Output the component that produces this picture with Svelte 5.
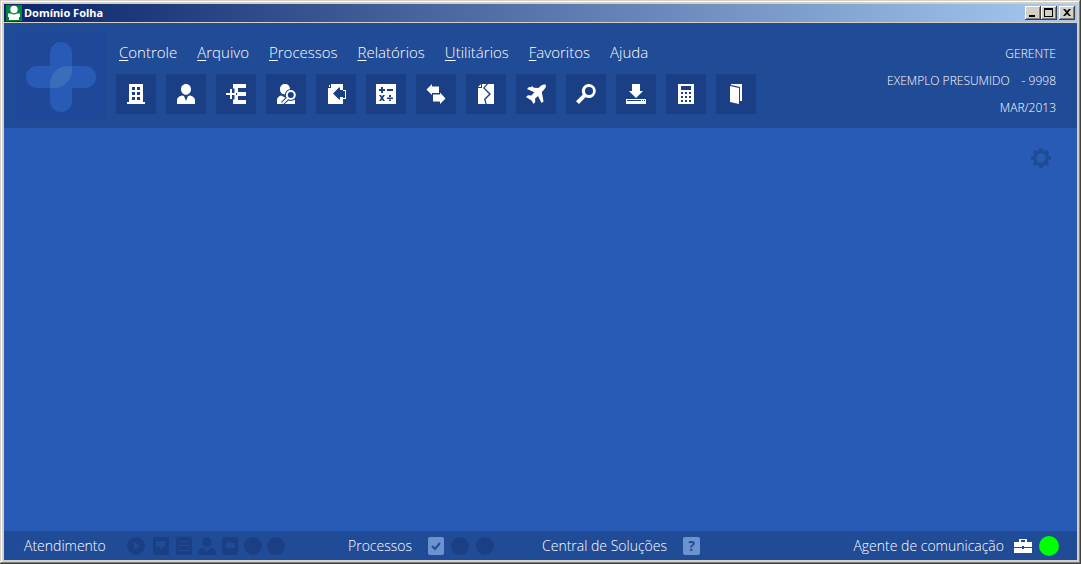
<script lang="ts">
  interface MenuItem {
    key: string
    rest: string
  }

  interface Tool {
    label: string
    path: string
    lens?: boolean
  }

  const menu: MenuItem[] = [
    {key: 'C', rest: 'ontrole'},
    {key: 'A', rest: 'rquivo'},
    {key: 'P', rest: 'rocessos'},
    {key: 'R', rest: 'elatórios'},
    {key: 'U', rest: 'tilitários'},
    {key: 'F', rest: 'avoritos'},
    {key: '', rest: 'Ajuda'},
  ];

  // 20x20 grid, even-odd fill
  const tools: Tool[] = [
    {
      label: 'Empresas',
      path: 'M3 0H17V18H19V20H1V18H3ZM6 3V6H9V3ZM11 3V6H14V3ZM6 8V11H9V8ZM11 8V11H14V8ZM6 13V16H9V13ZM11 13V16H14V13Z',
    },
    {
      label: 'Empregados',
      path: 'M10 0C13 0 15 2.3 15 5.3S12.8 10.8 10 10.8S5 8.3 5 5.3S7 0 10 0ZM6 11.5L8 12L10 17L12 12L14 11.5C17.5 12.5 19 14 19 16.5V20H1V16.5C1 14 2.500 12.500 6 11.500Z',
    },
    {
      label: 'Rubricas',
      path: 'M7 0H20V4H12V8H20V12H12V16H20V20H7V15.500H8.500V11H11V9H8.500V4.500H7ZM0 9H4V5H6V9H10V11H6V15H4V11H0Z',
    },
    {
      label: 'Consulta de empregados',
      path: 'M9 0C12 0 14 2 14 5.2S12 10.400 9 10.400S4 8.400 4 5.200S6 0 9 0ZM5 11.500L9 13.500L13 11.500Q19 13 19 17V20H1V16Q1 13 5 11.500Z',
      lens: true,
    },
    {
      label: 'Importar documento',
      path: 'M5 0H17V6H14V3.500H13L7 9.500L13 15.500H14V13H17V20H2V4H5ZM3 1V3H4V1ZM17 6H20V15H17V14H19V7H17Z',
    },
    {
      label: 'Cálculo',
      path: 'M0 0H20V20H0ZM5 3V5H3V7H5V9H7V7H9V5H7V3ZM11 5V7H17V5ZM3 11L5 14L3 17H5L6 15.500L7 17H9L7 14L9 11H7L6 12.500L5 11ZM13 11V13H15V11ZM11 13.500V15H17V13.500ZM13 15.500V17H15V15.500Z',
    },
    {
      label: 'Transferência',
      path: 'M0.500 5.500L6 0V2.500H13V9H6V11ZM7 10.500H14V8.500L19.500 14.500L14 20V17.500H7Z',
    },
    {
      label: 'Rescisão',
      path: 'M6 0H10.500L7 4L13 10L8 15L9.500 20H2V4H6ZM2 3L5 0V3ZM12 0H18V20H10.700L9.500 15.500L15 10L8.700 4Z',
    },
    {
      label: 'Férias',
      path: 'M19.500 0.500C20.600 2.600 19.500 4.500 15.800 8L17.500 17.500L15.500 19L12 12L9 14.800L9.300 18L7.500 20L5.500 16.500L0 13L2 11.300L5.500 11.500L8.300 8.200L1 5L3 3L5 3.300L6 2L8 3.700L12.300 4C15.500 1 17 0 19.500 0.500Z',
    },
    {
      label: 'Pesquisar',
      path: 'M13 0A7 7 0 1 1 9.500 13.200L3 20L0 17.200L6.800 10.500A7 7 0 0 1 13 0ZM13 3A4 4 0 1 0 13 11A4 4 0 1 0 13 3Z',
    },
    {
      label: 'Baixar',
      path: 'M6 0H14V7H17L10 14L3 7H6ZM0 15H20V20H0ZM1 16V17H15V16ZM16 16V17H17V16ZM18 16V17H19V16Z',
    },
    {
      label: 'Calculadora',
      path: 'M2 0H18V20H2ZM5 2V6H15V2ZM5 8V10H7V8ZM9 8V10H11V8ZM13 8V10H15V8ZM5 12V14H7V12ZM9 12V14H11V12ZM13 12V14H15V12ZM5 16V18H7V16ZM9 16V18H11V16ZM13 16V18H15V16Z',
    },
    {
      label: 'Sair',
      path: 'M4 2L13 4V20L4 18ZM5 0H16V17H14V3L5 1Z',
    },
  ];

  // 18x18 grid, even-odd fill
  const services = [
    {label: 'Chat', path: 'M3 0H15Q17 0 17 2V16Q17 18 15 18H3Q1 18 1 16V2Q1 0 3 0ZM5 4Q4 4 4 5V9Q4 10 5 10H8V13L11 10H12Q13 10 13 9V5Q13 4 12 4Z'},
    {label: 'Solicitações', path: 'M3 0H15Q17 0 17 2V16Q17 18 15 18H3Q1 18 1 16V2Q1 0 3 0ZM4 4V5H14V4ZM4 8V9H14V8ZM4 13V14H14V13Z'},
    {label: 'Clientes', path: 'M9 0A4.500 4.800 0 1 1 9 9.800A4.500 4.800 0 1 1 9 0ZM5 10.500L9 15L13 10.500Q18 12 18 16V18H0V16Q0 12 5 10.500Z'},
    {label: 'Retorno', path: 'M3 0H15Q17 0 17 2V16Q17 18 15 18H3Q1 18 1 16V2Q1 0 3 0ZM4 8.500L8 4V6H14V11H8V13Z'},
    {label: 'Alertas', path: 'M9 0A9 9 0 1 1 9 18A9 9 0 1 1 9 0Z'},
    {label: 'Mensagens', path: 'M9 0A9 9 0 1 1 9 18A9 9 0 1 1 9 0Z'},
  ];

  const teeth = [0, 45, 90, 135, 180, 225, 270, 315];
</script>

<div class="window">
  <div class="titlebar">
    <svg class="app-icon" width="16" height="16" viewBox="0 0 16 16" aria-hidden="true">
      <rect width="16" height="16" fill="#00833e" />
      <ellipse cx="8" cy="4.500" rx="3.700" ry="3.700" fill="#fff" />
      <path d="M2 8.500H5Q8 10.500 11 8.500H14V12H13V15H3V12H2Z" fill="#fff" />
    </svg>
    <h1>Domínio Folha</h1>
    <div class="controls">
      <button aria-label="Minimizar">
        <svg width="12" height="10" viewBox="0 0 12 10"><path d="M2 7H8V9H2Z" /></svg>
      </button>
      <button aria-label="Maximizar">
        <svg width="12" height="10" viewBox="0 0 12 10"><path fill-rule="evenodd" d="M1 0H10V9H1ZM2 2V8H9V2Z" /></svg>
      </button>
      <button class="close" aria-label="Fechar">
        <svg width="12" height="10" viewBox="0 0 12 10"><path d="M2 1H4L6 3L8 1H10L7 4.500L10 8H8L6 6L4 8H2L5 4.500Z" /></svg>
      </button>
    </div>
  </div>

  <header>
    <div class="logo">
      <svg width="70" height="70" viewBox="0 0 70 70" aria-hidden="true">
        <path fill="#275bb6" d="M24 11A11 11 0 0 1 46 11V24H59A11 11 0 0 1 59 46H46V59A11 11 0 0 1 24 59V46H11A11 11 0 0 1 11 24H24Z" />
        <path fill="#3b6db8" d="M46 24H42C31 24 24 33 24 42V46H28C38 46 46 38 46 28Z" />
      </svg>
    </div>
    <div class="center">
      <nav>
        {#each menu as item}
          <a href="#{item.key + item.rest}">{#if item.key}<u>{item.key}</u>{/if}{item.rest}</a>
        {/each}
      </nav>
      <div class="toolbar">
        {#each tools as tool}
          <button aria-label={tool.label}>
            <svg width="20" height="20" viewBox="0 0 20 20">
              <path fill-rule="evenodd" d={tool.path} />
              {#if tool.lens}
                <path class="lens-edge" d="M12 14L6.500 19.500" />
                <circle class="lens-edge" cx="14.800" cy="11" r="4" />
                <path class="lens" d="M12 14L6.500 19.500" />
                <circle class="lens" cx="14.800" cy="11" r="4" />
              {/if}
            </svg>
          </button>
        {/each}
      </div>
    </div>
    <div class="session">
      <span>GERENTE</span>
      <span class="company"><span>EXEMPLO PRESUMIDO</span><span>- 9998</span></span>
      <span>MAR/2013</span>
    </div>
  </header>

  <main>
    <button class="settings" aria-label="Configurações">
      <svg width="20" height="20" viewBox="0 0 20 20">
        <circle cx="10" cy="10" r="6.200" fill="none" stroke="#204b97" stroke-width="3" />
        {#each teeth as angle}
          <path fill="#204b97" d="M8.200 0H11.800L12.300 3.500H7.700Z" transform="rotate({angle} 10 10)" />
        {/each}
      </svg>
    </button>
  </main>

  <footer>
    <div class="group">
      <span class="label">Atendimento</span>
      <div class="services">
        <button aria-label="Iniciar">
          <svg width="20" height="18" viewBox="0 0 20 18"><path fill-rule="evenodd" d="M9 0A9 9 0 1 1 9 18A9 9 0 1 1 9 0ZM7 5V13L13 9Z" /></svg>
        </button>
        {#each services as service}
          <button aria-label={service.label}>
            <svg width="18" height="18" viewBox="0 0 18 18"><path fill-rule="evenodd" d={service.path} /></svg>
          </button>
        {/each}
      </div>
    </div>
    <div class="group">
      <span class="label">Processos</span>
      <div class="processes">
        <button aria-label="Concluídos">
          <svg width="16" height="18" viewBox="0 0 16 18">
            <rect width="16" height="18" rx="2" fill="#6c93cd" />
            <path d="M4 9L7 12L12 6" fill="none" stroke="#204b97" stroke-width="2" />
          </svg>
        </button>
        <button aria-label="Em andamento">
          <svg width="18" height="18" viewBox="0 0 18 18"><circle cx="9" cy="9" r="9" /></svg>
        </button>
        <button aria-label="Pendentes">
          <svg width="18" height="18" viewBox="0 0 18 18"><circle cx="9" cy="9" r="9" /></svg>
        </button>
      </div>
    </div>
    <div class="group">
      <span class="label">Central de Soluções</span>
      <button class="help">?</button>
    </div>
    <div class="group agent">
      <span>Agente de comunicação</span>
      <svg width="18" height="14" viewBox="0 0 18 14" fill="#fff" aria-hidden="true">
        <path fill-rule="evenodd" d="M5 0H13V3H18V8H10V7H8V8H0V3H5ZM7 1V3H11V1ZM0 9H8V10H10V9H18V14H0Z" />
      </svg>
      <i class="status"></i>
    </div>
  </footer>
</div>

<style>
  :global(body) {
    background: #d4d0c8;
  }

  .window {
    box-sizing: border-box;
    display: flex;
    flex-direction: column;
    min-height: 100vh;
    padding: 4px;
    background: #d4d0c8;
    box-shadow: inset -1px -1px #404040, inset 1px 1px #d4d0c8, inset -2px -2px #808080, inset 2px 2px #fff;
    color: #fff;
    font-family: "Segoe UI Light", "Open Sans", "Noto Sans", sans-serif;
    font-weight: 300;
  }

  button {
    display: flex;
    align-items: center;
    justify-content: center;
    padding: 0;
    border: 0;
    background: none;
    cursor: pointer;
  }

  svg {
    display: block;
    flex: none;
  }

  .titlebar {
    display: flex;
    align-items: center;
    height: 18px;
    margin-bottom: 1px;
    padding: 0 2px;
    background: linear-gradient(90deg, #0a246a, #a6caf0);
  }

  h1 {
    flex: 1;
    margin: 0 0 0 2px;
    font: bold 11px/18px Tahoma, "Noto Sans", sans-serif;
  }

  .controls {
    display: flex;
  }

  .controls button {
    width: 16px;
    height: 14px;
    background: #d4d0c8;
    box-shadow: inset -1px -1px #404040, inset 1px 1px #fff, inset -2px -2px #808080;
  }

  .controls .close {
    margin-left: 2px;
  }

  header {
    display: flex;
    padding: 9px 21px 7px 12px;
    background: #204b97;
  }

  .logo {
    display: flex;
    align-items: center;
    justify-content: center;
    width: 90px;
    background: #204898;
  }

  .center {
    flex: 1;
    margin-left: 10px;
  }

  nav {
    display: flex;
    gap: 20px;
    padding: 9px 0 10px 3px;
  }

  nav a {
    color: #fff;
    font-size: 15px;
    line-height: 23px;
    text-decoration: none;
  }

  u {
    text-underline-offset: 2px;
  }

  .toolbar {
    display: flex;
    gap: 10px;
  }

  .toolbar button {
    width: 40px;
    height: 40px;
    background: #1b3f85;
  }

  .toolbar svg {
    fill: #fff;
  }

  .lens-edge {
    fill: #1b3f85;
    stroke: #1b3f85;
    stroke-width: 4;
  }

  .lens {
    fill: none;
    stroke: #fff;
    stroke-width: 2;
  }

  .session {
    display: flex;
    flex-direction: column;
    align-items: flex-end;
    padding-top: 8px;
    font-size: 12px;
    line-height: 27px;
  }

  .company {
    display: flex;
    gap: 12px;
  }

  main {
    display: flex;
    flex: 1;
    align-items: flex-start;
    justify-content: flex-end;
    padding: 20px 26px;
    background: #275bb6;
  }

  footer {
    display: grid;
    grid-template-columns: 324px 194px auto 1fr;
    align-items: center;
    height: 29px;
    padding: 0 18px 0 20px;
    background: #204b97;
    font-size: 14px;
    line-height: 29px;
  }

  .group {
    display: flex;
    align-items: center;
    white-space: nowrap;
  }

  .services,
  .processes {
    display: flex;
    fill: #1b3f85;
  }

  .services {
    gap: 5px;
    margin-left: 21px;
  }

  .processes {
    gap: 7px;
    margin-left: 16px;
  }

  .help {
    width: 17px;
    height: 18px;
    margin-left: 16px;
    border-radius: 2px;
    background: #6c93cd;
    color: #204b97;
    font: bold 14px/18px "Open Sans", sans-serif;
  }

  .agent {
    justify-content: flex-end;
  }

  .agent svg {
    margin: 0 7px 0 10px;
  }

  .status {
    width: 20px;
    height: 20px;
    border-radius: 50%;
    background: #0f0;
  }
</style>
